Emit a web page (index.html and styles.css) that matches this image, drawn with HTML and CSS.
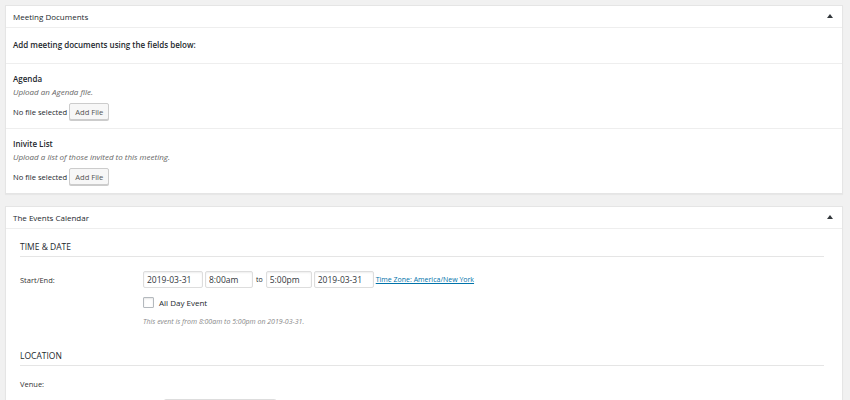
FILE: index.html
```html
<!DOCTYPE html>
<html lang="en">
<head>
    <meta charset="UTF-8">
    <title>Edit Meeting</title>
    <link rel="stylesheet" href="styles.css">
</head>
<body>

<div class="postbox">
    <div class="postbox-head">
        <h2>Meeting Documents</h2>
        <span class="toggle"></span>
    </div>
    <div class="doc-intro">Add meeting documents using the fields below:</div>
    <div class="doc-field">
        <div class="doc-label">Agenda</div>
        <div class="doc-desc">Upload an Agenda file.</div>
        <div class="file-row"><span>No file selected</span><button class="btn">Add File</button></div>
    </div>
    <div class="doc-field last">
        <div class="doc-label">Inivite List</div>
        <div class="doc-desc">Upload a list of those invited to this meeting.</div>
        <div class="file-row"><span>No file selected</span><button class="btn">Add File</button></div>
    </div>
</div>

<div class="postbox">
    <div class="postbox-head">
        <h2>The Events Calendar</h2>
        <span class="toggle"></span>
    </div>
    <div class="ec-body">
        <h3 class="ec-section">TIME &amp; DATE</h3>
        <div class="ec-row">
            <div class="ec-label">Start/End:</div>
            <div class="ec-fields">
                <div class="date-row">
                    <input class="inp w-date" value="2019-03-31">
                    <input class="inp w-time" value="8:00am">
                    <span class="to">to</span>
                    <input class="inp w-time2" value="5:00pm">
                    <input class="inp w-date" value="2019-03-31">
                    <a href="#" class="tz">Time Zone: America/New York</a>
                </div>
                <label class="allday"><span class="cb"></span>All Day Event</label>
                <div class="note">This event is from 8:00am to 5:00pm on 2019-03-31.</div>
            </div>
        </div>
        <h3 class="ec-section loc">LOCATION</h3>
        <div class="ec-row venue">
            <div class="ec-label">Venue:</div>
        </div>
        <div class="venue-select"></div>
    </div>
</div>

</body>
</html>
```

FILE: styles.css
```css
body { margin: 0; padding: 5px 7px 0 5px; background: #f1f1f1; font-family: 'Open Sans', 'Noto Sans', sans-serif; font-size: 8px; color: #23282d; overflow: hidden; }

/* Meta boxes */
.postbox { background: #fff; border: 1px solid #e5e5e5; box-shadow: 0 1px 1px rgba(0,0,0,0.04); margin-bottom: 12px; }
.postbox-head { display: flex; align-items: center; justify-content: space-between; height: 21px; padding: 0 7px; border-bottom: 1px solid #eee; }
.postbox-head h2 { margin: 0; font-size: 8px; font-weight: 400; color: #23282d; }
.toggle { width: 0; height: 0; border-left: 3px solid transparent; border-right: 3px solid transparent; border-bottom: 4px solid #32373c; margin: 0 2px 1px 0; }

/* Documents */
.doc-intro { font-weight: 600; padding: 11px 7px 0; height: 24px; border-bottom: 1px solid #eee; }
.doc-field { padding: 9px 7px 8px; border-bottom: 1px solid #eee; }
.doc-field.last { border-bottom: none; padding-bottom: 8px; }
.doc-label { font-weight: 600; line-height: 11px; }
.doc-desc { font-style: italic; color: #666; line-height: 11px; margin-top: 2px; }
.file-row { display: flex; align-items: center; gap: 2px; margin-top: 6px; font-size: 7.6px; }
.btn { font-family: inherit; font-size: 7.6px; color: #555; background: #f7f7f7; border: 1px solid #ccc; border-radius: 2px; box-shadow: 0 1px 0 #ccc; height: 17px; padding: 0 5px; }

/* Events calendar */
.ec-body { padding: 0 18px 0 14px; }
.ec-section { margin: 0; font-size: 8.5px; font-weight: 400; color: #23282d; padding: 12px 0 4px; border-bottom: 1px solid #e5e5e5; }
.ec-section.loc { padding-top: 24px; }
.ec-row { display: flex; padding-top: 14px; }
.ec-row.venue { padding-top: 13px; }
.ec-label { width: 123px; font-size: 7.5px; line-height: 18px; color: #333; }
.venue .ec-label { line-height: 11px; }
.date-row { display: flex; align-items: center; gap: 2px; }
.inp { font-family: inherit; font-size: 8.5px; color: #32373c; border: 1px solid #ddd; border-radius: 2px; box-shadow: inset 0 1px 2px rgba(0,0,0,0.07); height: 17px; box-sizing: border-box; padding: 0 3px; }
.w-date { width: 60px; }
.w-time { width: 48px; }
.w-time2 { width: 46px; }
.to { font-size: 7px; margin: 0 1px; }
.tz { color: #0073aa; font-size: 7px; }
.allday { display: flex; align-items: center; gap: 5px; margin-top: 9px; }
.cb { width: 9px; height: 9px; border: 1px solid #b4b9be; border-radius: 1px; box-shadow: inset 0 1px 2px rgba(0,0,0,0.1); }
.note { font-style: italic; font-size: 7px; color: #888; margin-top: 9px; }
.venue-select { width: 110px; height: 10px; margin: 9px 0 0 144px; border: 1px solid #ddd; border-bottom: none; border-radius: 2px 2px 0 0; }
```
